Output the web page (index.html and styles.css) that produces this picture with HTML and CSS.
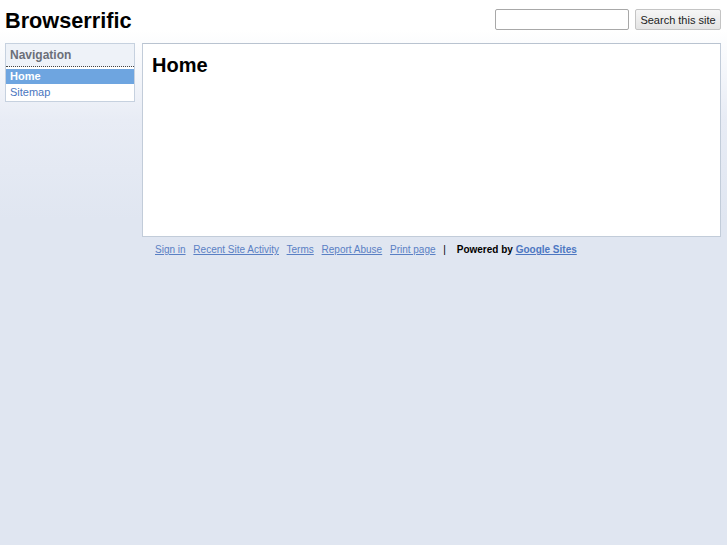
FILE: index.html
```html
<!DOCTYPE html>
<html>
<head>
<meta charset="utf-8">
<link rel="stylesheet" href="styles.css">
</head>
<body>
<div class="header">
  <h1 class="site-title">Browserrific</h1>
  <form class="search">
    <input class="search-input" type="text">
    <button class="search-btn" type="button">Search this site</button>
  </form>
</div>
<div class="layout">
  <div class="sidebar">
    <div class="nav-title">Navigation</div>
    <div class="nav-item active">Home</div>
    <div class="nav-item"><a href="#">Sitemap</a></div>
  </div>
  <div class="main">
    <h2 class="page-title">Home</h2>
  </div>
</div>
<div class="footer">
  <a href="#">Sign in</a>
  <a href="#">Recent Site Activity</a>
  <a href="#">Terms</a>
  <a href="#">Report Abuse</a>
  <a href="#">Print page</a>
  <span class="sep">|</span>
  <span class="powered">Powered by <a href="#">Google Sites</a></span>
</div>
</body>
</html>
```
FILE: styles.css
```css
html, body {
  margin: 0;
  padding: 0;
  height: 100%;
}
body {
  font-family: "Liberation Sans", Arial, sans-serif;
  background: linear-gradient(to bottom, #ffffff 0px, #ffffff 30px, #e8ecf5 120px, #e0e6f1 220px, #e0e6f1 100%);
  min-height: 545px;
  color: #000;
}
.header {
  display: flex;
  justify-content: space-between;
  align-items: flex-start;
  height: 43px;
  padding: 0 6px 0 5px;
  box-sizing: border-box;
}
.site-title {
  margin: 8px 0 0 0;
  font-size: 21.7px;
  line-height: 25px;
  font-weight: bold;
}
.search {
  display: flex;
  gap: 6px;
  margin: 9px 0 0 0;
}
.search-input {
  width: 134px;
  height: 21px;
  box-sizing: border-box;
  border: 1px solid #a8a8a8;
  border-radius: 2px;
  margin: 0;
  padding: 1px 3px;
  background: #fff;
}
.search-btn {
  height: 21px;
  width: 86px;
  box-sizing: border-box;
  margin: 0;
  padding: 0;
  font-family: "Liberation Sans", Arial, sans-serif;
  font-size: 11px;
  color: #222;
  border: 1px solid #c4c4c4;
  border-radius: 2px;
  background: linear-gradient(to bottom, #f6f6f6, #e4e4e4);
}
.layout {
  display: flex;
  gap: 7px;
  padding: 0 6px 0 5px;
  align-items: flex-start;
}
.sidebar {
  width: 130px;
  box-sizing: border-box;
  border: 1px solid #c6d1df;
  background: #fff;
  font-size: 11px;
  padding-bottom: 1px;
}
.nav-title {
  background: #eef2f8;
  color: #6b6f78;
  font-weight: bold;
  font-size: 12px;
  height: 22px;
  line-height: 23px;
  padding-left: 4px;
  border-bottom: 1px dotted #444;
  margin-bottom: 2px;
}
.nav-item {
  height: 15px;
  line-height: 14px;
  padding-left: 4px;
}
.nav-item.active {
  background: #6ea5e0;
  color: #fff;
  font-weight: bold;
}
.nav-item a {
  color: #4a76c0;
  text-decoration: none;
}
.nav-item + .nav-item {
  height: 16px;
  line-height: 17px;
}
.main {
  flex: 1;
  height: 194px;
  box-sizing: border-box;
  background: #fff;
  border: 1px solid #c2ccd9;
  border-top-color: #b9c3d0;
  padding: 9px 9px;
}
.page-title {
  margin: 0;
  font-size: 20px;
  line-height: 24px;
  font-weight: bold;
}
.footer {
  margin: 6px 0 0 155px;
  font-size: 10px;
  line-height: 14px;
  color: #000;
}
.footer a {
  color: #5a80c4;
  text-decoration: underline;
  margin-right: 5px;
}
.footer .sep {
  margin-right: 8px;
}
.footer .powered {
  font-weight: bold;
}
.footer .powered a {
  color: #4d77c2;
  font-weight: bold;
}
```
